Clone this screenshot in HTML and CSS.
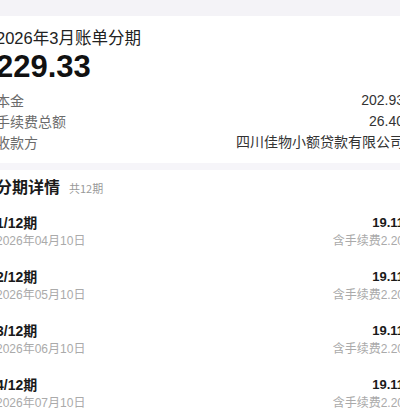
FILE: index.html
```html
<!DOCTYPE html>
<html lang="zh-CN">
<head>
<meta charset="utf-8">
<link rel="stylesheet" href="styles.css">
</head>
<body>
<div class="page">
  <div class="top-gap"></div>
  <section class="card summary">
    <div class="title">2026年3月账单分期</div>
    <div class="amount">229.33</div>
    <div class="row"><span class="label">本金</span><span class="value">202.93</span></div>
    <div class="row"><span class="label">手续费总额</span><span class="value">26.40</span></div>
    <div class="row"><span class="label">收款方</span><span class="value">四川佳物小额贷款有限公司</span></div>
  </section>
  <div class="sep"></div>
  <section class="card detail">
    <div class="detail-head"><span class="detail-title">分期详情</span><span class="detail-count">共12期</span></div>
    <div class="item">
      <div class="item-line"><span class="item-name">1/12期</span><span class="item-amt">19.11</span></div>
      <div class="item-line sub"><span>2026年04月10日</span><span>含手续费2.20</span></div>
    </div>
    <div class="item">
      <div class="item-line"><span class="item-name">2/12期</span><span class="item-amt">19.11</span></div>
      <div class="item-line sub"><span>2026年05月10日</span><span>含手续费2.20</span></div>
    </div>
    <div class="item">
      <div class="item-line"><span class="item-name">3/12期</span><span class="item-amt">19.11</span></div>
      <div class="item-line sub"><span>2026年06月10日</span><span>含手续费2.20</span></div>
    </div>
    <div class="item">
      <div class="item-line"><span class="item-name">4/12期</span><span class="item-amt">19.11</span></div>
      <div class="item-line sub"><span>2026年07月10日</span><span>含手续费2.20</span></div>
    </div>
  </section>
</div>
</body>
</html>
```

FILE: styles.css
```css
html, body {
  margin: 0;
  padding: 0;
  background: #ffffff;
  overflow: hidden;
}
body {
  font-family: "Noto Sans CJK SC", "Liberation Sans", sans-serif;
  color: #1f1f1f;
}
.page {
  margin: 0 -4px 0 -4px;
}
.top-gap {
  height: 16px;
  background: #f4f3f7;
}
.card {
  background: #ffffff;
}
.summary {
  padding: 11px 0 10px;
}
.title {
  font-family: "Liberation Sans", "Noto Sans CJK SC", sans-serif;
  font-size: 16.5px;
  line-height: 22px;
  color: #222;
}
.amount {
  font-family: "Liberation Sans", sans-serif;
  font-size: 31px;
  font-weight: bold;
  line-height: 34px;
  margin-top: 1px;
  margin-bottom: 6px;
  color: #111;
}
.row {
  display: flex;
  justify-content: space-between;
  font-size: 14px;
  line-height: 21px;
}
.label {
  color: #6b6b6b;
}
.value {
  font-family: "Liberation Sans", "Noto Sans CJK SC", sans-serif;
  color: #333;
}
.sep {
  height: 7px;
  background: #f6f5f9;
}
.detail {
  padding-top: 5px;
}
.detail-head {
  display: flex;
  align-items: baseline;
  gap: 9px;
  line-height: 22px;
  padding-bottom: 5px;
}
.detail-title {
  font-size: 16px;
  font-weight: bold;
  color: #1a1a1a;
}
.detail-count {
  font-size: 11px;
  color: #999;
}
.item {
  padding: 10px 0 9px;
}
.item-line {
  display: flex;
  justify-content: space-between;
  font-size: 14px;
  line-height: 18px;
}
.item-name, .item-amt {
  font-family: "Liberation Sans", "Noto Sans CJK SC", sans-serif;
  font-weight: bold;
  color: #1a1a1a;
}
.item-amt {
  font-size: 13px;
}
.item-line.sub {
  margin-top: 1px;
  font-family: "Liberation Sans", "Noto Sans CJK SC", sans-serif;
  font-size: 12px;
  line-height: 16px;
  color: #aaa;
}
```
